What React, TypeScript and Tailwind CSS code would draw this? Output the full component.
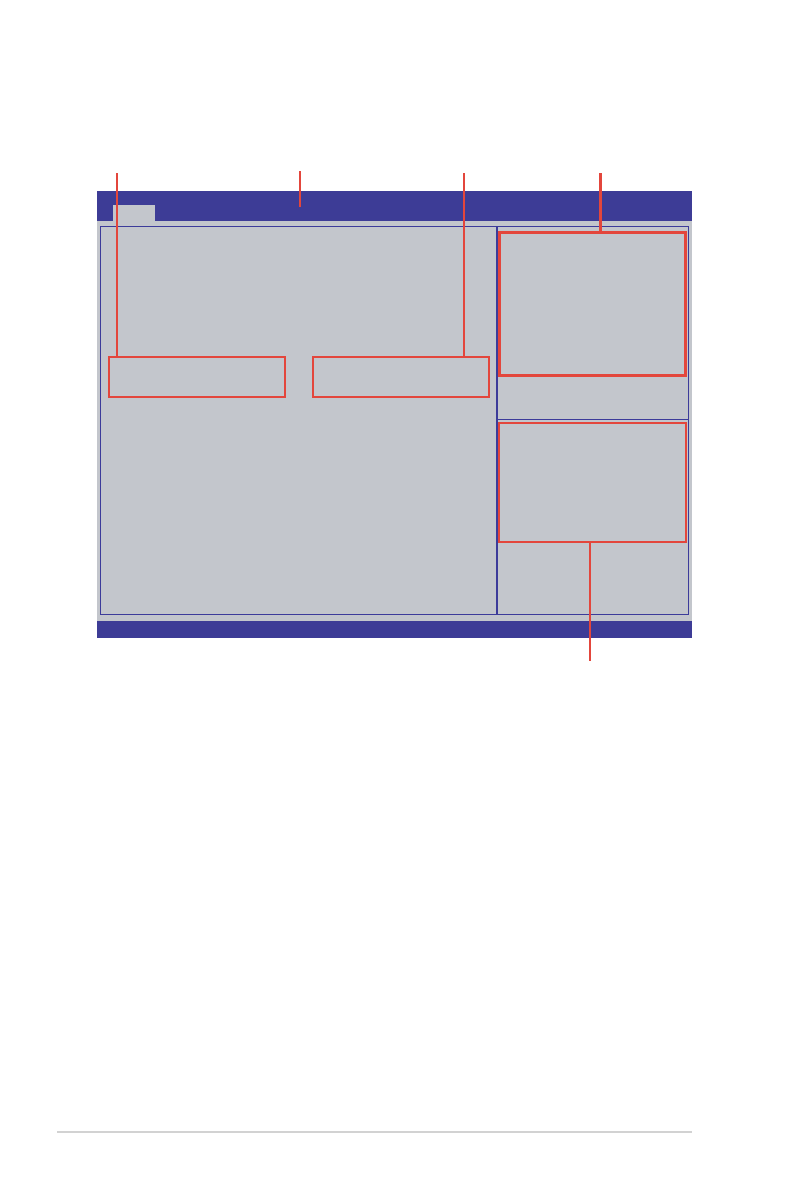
export default function App() {
  return (
    <div className="relative w-[794px] h-[1196px] bg-white overflow-hidden font-['Liberation_Sans',sans-serif]">
      {/* screen mock with callout boxes */}
      <div className="ml-[97px] pt-[191px] w-[595px]">
        <div className="h-[30px] bg-[#3d3c96] flex items-end pl-[16px]">
          <div className="w-[42px] h-[16px] bg-[#c3c6cc]" />
        </div>
        <div className="h-[400px] bg-[#c3c6cc] pt-[5px] px-[3px]">
          <div className="h-[389px] border border-[#3c3b9a] flex">
            <div className="w-[397px] border-r-2 border-[#3c3b9a] pt-[129px] pl-[7px] flex gap-[26px] items-start">
              <div className="w-[178px] h-[42px] border-2 border-[#e3463c]" />
              <div className="w-[178px] h-[42px] border-2 border-[#e3463c]" />
            </div>
            <div className="flex-1 flex flex-col">
              <div className="h-[193px] border-b-[1.5px] border-[#3c3b9a] pt-[4px] pr-[1px]">
                <div className="h-[146px] border-[3px] border-[#e3463c]" />
              </div>
              <div className="flex-1 pt-[2px] pr-[1px]">
                <div className="h-[121px] border-2 border-[#e3463c]" />
              </div>
            </div>
          </div>
        </div>
        <div className="h-[17px] bg-[#3d3c96]" />
      </div>

      {/* footer rule */}
      <div className="absolute left-[57px] top-[1131px] w-[635px] h-[2px] bg-[#d2d2d2]" />

      {/* callout leaders */}
      <div className="absolute left-[116px] top-[173px] w-[2px] h-[184px] bg-[#e3463c]" />
      <div className="absolute left-[299px] top-[171px] w-[2px] h-[36px] bg-[#e3463c]" />
      <div className="absolute left-[463px] top-[173px] w-[2px] h-[184px] bg-[#e3463c]" />
      <div className="absolute left-[599px] top-[173px] w-[3px] h-[58px] bg-[#e3463c]" />
      <div className="absolute left-[589px] top-[543px] w-[2px] h-[118px] bg-[#e3463c]" />
    </div>
  );
}
